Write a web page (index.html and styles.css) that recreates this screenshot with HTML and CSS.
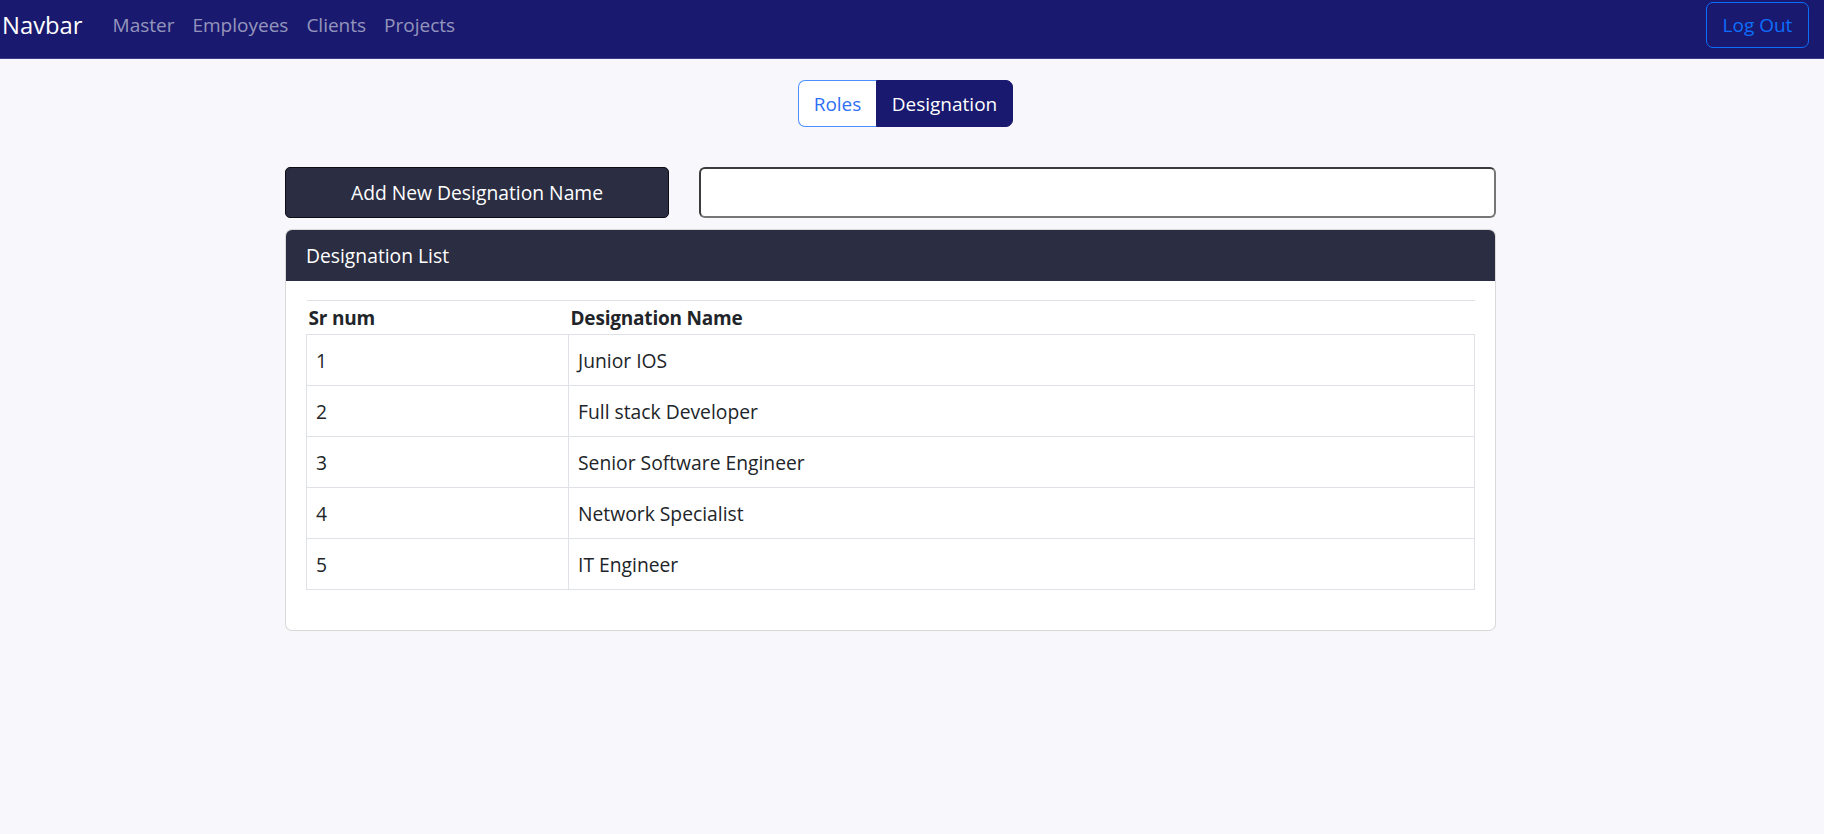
FILE: index.html
```html
<!DOCTYPE html>
<html lang="en">
<head>
<meta charset="utf-8">
<title>Designation</title>
<link rel="stylesheet" href="styles.css">
</head>
<body>
<nav class="navbar">
  <div class="nav-left">
    <a class="brand" href="#">Navbar</a>
    <ul class="nav-links">
      <li><a href="#">Master</a></li>
      <li><a href="#">Employees</a></li>
      <li><a href="#">Clients</a></li>
      <li><a href="#">Projects</a></li>
    </ul>
  </div>
  <button class="btn-logout">Log Out</button>
</nav>

<main class="page">
  <div class="toggle-wrap">
    <div class="toggle-group">
      <button class="toggle toggle-off">Roles</button>
      <button class="toggle toggle-on">Designation</button>
    </div>
  </div>

  <section class="content">
    <div class="add-row">
      <button class="btn-add">Add New Designation Name</button>
      <input class="name-input" type="text">
    </div>

    <div class="card">
      <div class="card-header">Designation List</div>
      <div class="card-body">
        <table class="list">
          <thead>
            <tr><th class="col-num">Sr num</th><th>Designation Name</th></tr>
          </thead>
          <tbody>
            <tr><td>1</td><td>Junior IOS</td></tr>
            <tr><td>2</td><td>Full stack Developer</td></tr>
            <tr><td>3</td><td>Senior Software Engineer</td></tr>
            <tr><td>4</td><td>Network Specialist</td></tr>
            <tr><td>5</td><td>IT Engineer</td></tr>
          </tbody>
        </table>
      </div>
    </div>
  </section>
</main>
</body>
</html>
```

FILE: styles.css
```css
* { box-sizing: border-box; }

html, body {
  margin: 0;
  padding: 0;
}

body {
  background: #f8f8fc;
  font-family: "Open Sans", "Noto Sans", "Liberation Sans", sans-serif;
  font-size: 19px;
  color: #212529;
  min-height: 834px;
}

.navbar {
  height: 59px;
  background: #19196f;
  border-bottom: 1px solid #3a3a88;
  display: flex;
  align-items: flex-start;
  justify-content: space-between;
  padding: 2px 15px 0 2px;
}

.nav-left {
  display: flex;
  align-items: center;
  height: 46px;
}

.brand {
  color: #ffffff;
  text-decoration: none;
  font-size: 23.8px;
  margin-right: 30px;
}

.nav-links {
  list-style: none;
  margin: 0;
  padding: 0;
  display: flex;
  gap: 18px;
}

.nav-links a {
  color: rgba(255, 255, 255, 0.55);
  text-decoration: none;
  font-size: 19px;
}

.btn-logout {
  height: 46px;
  width: 103px;
  background: transparent;
  border: 1px solid #0d6efd;
  color: #0d6efd;
  border-radius: 7px;
  font-family: inherit;
  font-size: 19px;
}

.page {
  padding-top: 21px;
}

.toggle-wrap {
  display: flex;
  justify-content: center;
  padding-right: 13px;
}

.toggle-group {
  display: flex;
  height: 47px;
}

.toggle {
  font-family: inherit;
  font-size: 19px;
  padding: 0;
  height: 47px;
}

.toggle-off {
  width: 78px;
  background: #ffffff;
  color: #2f6ff7;
  border: 1px solid #4d8ffd;
  border-right: none;
  border-radius: 7px 0 0 7px;
}

.toggle-on {
  width: 137px;
  background: #19196f;
  color: #ffffff;
  border: 1px solid #19196f;
  border-radius: 0 7px 7px 0;
}

.content {
  width: 1211px;
  margin-left: 285px;
  margin-top: 40px;
}

.add-row {
  display: grid;
  grid-template-columns: 384px 1fr;
  column-gap: 30px;
  height: 51px;
}

.btn-add {
  height: 51px;
  background: #2b2d42;
  color: #ffffff;
  border: 1px solid #0c0c14;
  border-radius: 5px;
  font-family: inherit;
  font-size: 19.3px;
}

.name-input {
  height: 51px;
  background: #ffffff;
  border: 2px solid;
  border-color: #3b3b3b #767676 #767676 #3b3b3b;
  border-radius: 6px;
  font-family: inherit;
  font-size: 19px;
}

.card {
  margin-top: 11px;
  background: #ffffff;
  border: 1px solid rgba(0, 0, 0, 0.15);
  border-radius: 7px;
  overflow: hidden;
}

.card-header {
  height: 51px;
  background: #2b2d42;
  color: #ffffff;
  display: flex;
  align-items: center;
  padding: 0 20px;
  font-size: 19.3px;
}

.card-body {
  padding: 19px 20px 20px;
}

.list {
  width: 100%;
  border-collapse: collapse;
  margin-bottom: 20px;
}

.list th {
  text-align: left;
  font-weight: 700;
  font-size: 19px;
  letter-spacing: -0.2px;
  height: 34px;
  padding: 0 2px;
  border-top: 1px solid #dee2e6;
  border-bottom: 1px solid #dee2e6;
}

.list th.col-num {
  width: 262px;
}

.list td {
  height: 51px;
  padding: 0 9px;
  border: 1px solid #dee2e6;
  font-size: 19.3px;
}
```
